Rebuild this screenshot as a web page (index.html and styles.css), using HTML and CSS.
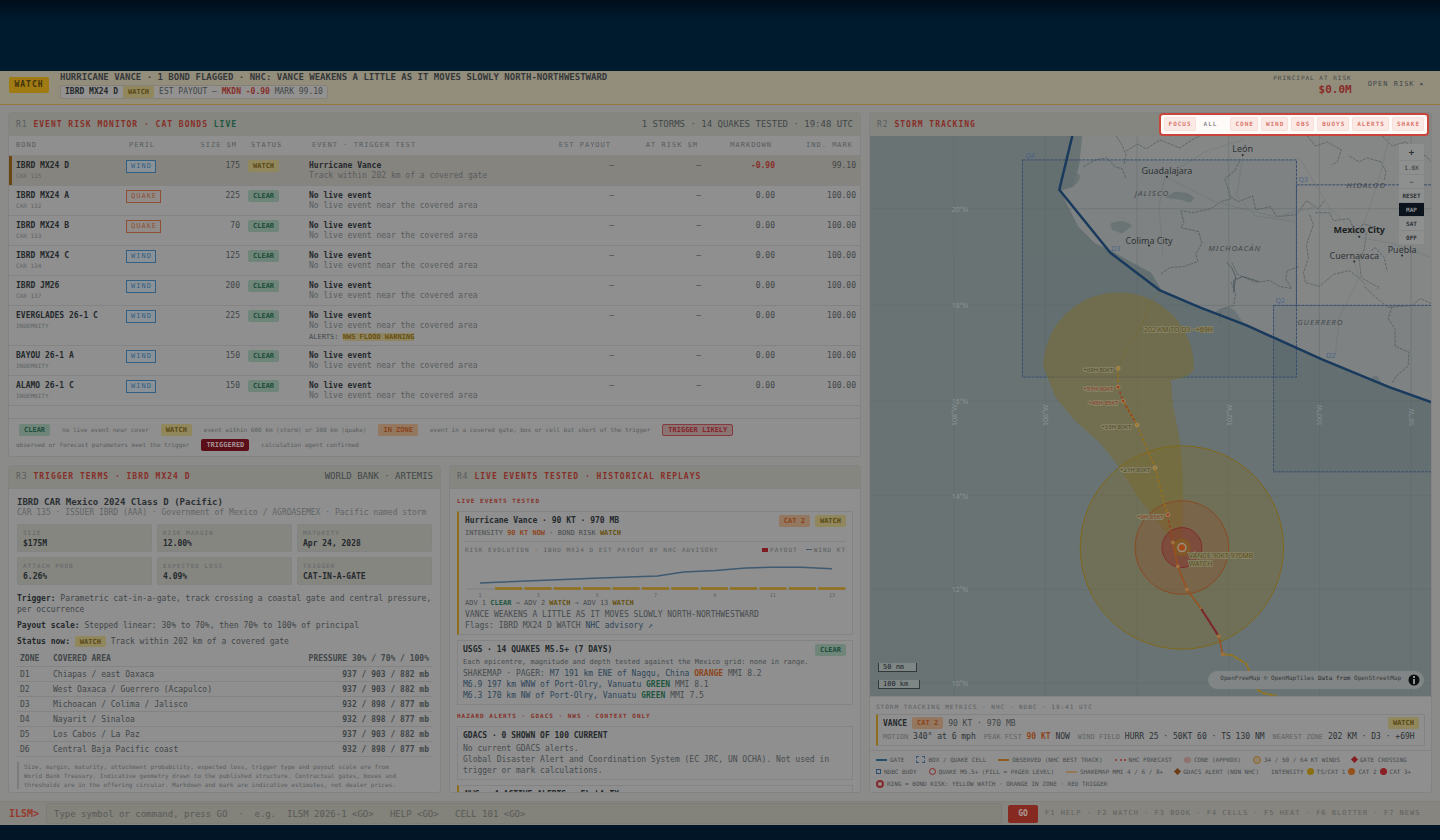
FILE: index.html
```html
<!DOCTYPE html>
<html lang="en">

<head>
    <meta charset="UTF-8">
    <meta name="viewport" content="width=device-width, initial-scale=1.0">
    <title>ILSM Event Risk</title>
    <link rel="stylesheet" href="styles.css">
</head>

<body>

    <div class="app">

        <header class="alertbar">
            <span class="level">WATCH</span>
            <div class="alert-text">
                <h1>HURRICANE VANCE · 1 BOND FLAGGED · NHC: VANCE WEAKENS A LITTLE AS IT MOVES SLOWLY NORTH-NORTHWESTWARD</h1>
                <div class="bondchip">
                    <b>IBRD MX24 D</b>
                    <span class="tag watch">WATCH</span>
                    <span>EST PAYOUT — <b class="red">MKDN -0.90</b> MARK 99.10</span>
                </div>
            </div>
            <div class="principal">
                <span>PRINCIPAL AT RISK</span>
                <b>$0.0M</b>
            </div>
            <button class="openrisk">OPEN RISK ▸</button>
        </header>

        <main class="grid">

            <section class="panel r1">
                <div class="panel-head">
                    <h2><i>R1</i> EVENT RISK MONITOR · CAT BONDS <em>LIVE</em></h2>
                    <span class="right">1 STORMS · 14 QUAKES TESTED · 19:48 UTC</span>
                </div>
                <table class="bonds">
                    <thead>
                        <tr>
                            <th class="c-bond">BOND</th>
                            <th class="c-peril">PERIL</th>
                            <th class="c-size num">SIZE $M</th>
                            <th class="c-status">STATUS</th>
                            <th class="c-event">EVENT · TRIGGER TEST</th>
                            <th class="c-pay num">EST PAYOUT</th>
                            <th class="c-risk num">AT RISK $M</th>
                            <th class="c-down num">MARKDOWN</th>
                            <th class="c-mark num">IND. MARK</th>
                        </tr>
                    </thead>
                    <tbody>
                        <tr class="selected">
                            <td><b>IBRD MX24 D</b><small>CAR 135</small></td>
                            <td><span class="peril">WIND</span></td>
                            <td class="num">175</td>
                            <td><span class="tag watch">WATCH</span></td>
                            <td><b>Hurricane Vance</b><p>Track within 202 km of a covered gate</p></td>
                            <td class="num">—</td>
                            <td class="num">—</td>
                            <td class="num"><b class="red">-0.90</b></td>
                            <td class="num">99.10</td>
                        </tr>
                        <tr>
                            <td><b>IBRD MX24 A</b><small>CAR 132</small></td>
                            <td><span class="peril quake">QUAKE</span></td>
                            <td class="num">225</td>
                            <td><span class="tag clear">CLEAR</span></td>
                            <td><b>No live event</b><p>No live event near the covered area</p></td>
                            <td class="num">—</td>
                            <td class="num">—</td>
                            <td class="num">0.00</td>
                            <td class="num">100.00</td>
                        </tr>
                        <tr>
                            <td><b>IBRD MX24 B</b><small>CAR 133</small></td>
                            <td><span class="peril quake">QUAKE</span></td>
                            <td class="num">70</td>
                            <td><span class="tag clear">CLEAR</span></td>
                            <td><b>No live event</b><p>No live event near the covered area</p></td>
                            <td class="num">—</td>
                            <td class="num">—</td>
                            <td class="num">0.00</td>
                            <td class="num">100.00</td>
                        </tr>
                        <tr>
                            <td><b>IBRD MX24 C</b><small>CAR 134</small></td>
                            <td><span class="peril">WIND</span></td>
                            <td class="num">125</td>
                            <td><span class="tag clear">CLEAR</span></td>
                            <td><b>No live event</b><p>No live event near the covered area</p></td>
                            <td class="num">—</td>
                            <td class="num">—</td>
                            <td class="num">0.00</td>
                            <td class="num">100.00</td>
                        </tr>
                        <tr>
                            <td><b>IBRD JM26</b><small>CAR 137</small></td>
                            <td><span class="peril">WIND</span></td>
                            <td class="num">200</td>
                            <td><span class="tag clear">CLEAR</span></td>
                            <td><b>No live event</b><p>No live event near the covered area</p></td>
                            <td class="num">—</td>
                            <td class="num">—</td>
                            <td class="num">0.00</td>
                            <td class="num">100.00</td>
                        </tr>
                        <tr>
                            <td><b>EVERGLADES 26-1 C</b><small>INDEMNITY</small></td>
                            <td><span class="peril">WIND</span></td>
                            <td class="num">225</td>
                            <td><span class="tag clear">CLEAR</span></td>
                            <td><b>No live event</b><p>No live event near the covered area</p>
                                <div class="nws">ALERTS: <mark>NWS FLOOD WARNING</mark></div></td>
                            <td class="num">—</td>
                            <td class="num">—</td>
                            <td class="num">0.00</td>
                            <td class="num">100.00</td>
                        </tr>
                        <tr>
                            <td><b>BAYOU 26-1 A</b><small>INDEMNITY</small></td>
                            <td><span class="peril">WIND</span></td>
                            <td class="num">150</td>
                            <td><span class="tag clear">CLEAR</span></td>
                            <td><b>No live event</b><p>No live event near the covered area</p></td>
                            <td class="num">—</td>
                            <td class="num">—</td>
                            <td class="num">0.00</td>
                            <td class="num">100.00</td>
                        </tr>
                        <tr>
                            <td><b>ALAMO 26-1 C</b><small>INDEMNITY</small></td>
                            <td><span class="peril">WIND</span></td>
                            <td class="num">150</td>
                            <td><span class="tag clear">CLEAR</span></td>
                            <td><b>No live event</b><p>No live event near the covered area</p></td>
                            <td class="num">—</td>
                            <td class="num">—</td>
                            <td class="num">0.00</td>
                            <td class="num">100.00</td>
                        </tr>
                    </tbody>
                </table>
                <div class="status-key">
                    <span class="tag clear first">CLEAR</span>
                    <span>no live event near cover</span>
                    <span class="tag watch">WATCH</span>
                    <span>event within 600 km (storm) or 300 km (quake)</span>
                    <span class="tag zone">IN ZONE</span>
                    <span>event in a covered gate, box or cell but short of the trigger</span>
                    <span class="tag likely">TRIGGER LIKELY</span>
                    <span>observed or forecast parameters meet the trigger</span>
                    <span class="tag triggered">TRIGGERED</span>
                    <span>calculation agent confirmed</span>
                </div>
            </section>

            <section class="panel r2">
                <div class="panel-head">
                    <h2><i>R2</i> STORM TRACKING</h2>
                    <div class="layers">
                        <button>FOCUS</button>
                        <button class="off">ALL</button>
                        <button>CONE</button>
                        <button>WIND</button>
                        <button>OBS</button>
                        <button>BUOYS</button>
                        <button>ALERTS</button>
                        <button>SHAKE</button>
                    </div>
                </div>
                <div class="map">
                    <svg viewBox="869 135 563 562" preserveAspectRatio="xMidYMid slice">
                        <rect x="869" y="135" width="563" height="562" fill="#697374" />
                        <!-- land -->
                        <path fill="#858787" d="M1082 135L1079 163 1073 186 1060 190 1068 206 1078 226 1095 243 1111 250 1130 261 1151 272 1162 290 1190 303 1222 315 1242 322 1290 344 1322 358 1380 382 1432 401V135z" />
                        <!-- lakes and lagoons -->
                        <g fill="#6a7475">
                            <path d="M1064 175q10-7 16 0-2 11-10 10l-8-3zM1165 197l10-6 12 1 8 5-5 5-9-3zM1215 312q12-9 20-2l9 13zM1372 379q5-9 10 4zM1110 223q12-6 22 2l-10 8-10-4z" opacity=".8" />
                            <path d="M1247 330q6-4 12 4z" />
                        </g>
                        <!-- state borders and rivers -->
                        <g fill="none" stroke="#606769" stroke-width="1" stroke-dasharray="3 1">
                            <path d="M1083 166l12-7 12-2 8 9 7 2 4 10M1116 135l6 9 4 10-2 9M1126 150l12-7 8 5 14-9 20 8 12-8 8-4M1240 160l-5 10-10 8 4 12 2 8-10 3-10 7-18 4-12-2 3 12-3 5 18 4 3 12-6 10 2 8-14 5-14 1-10 7" />
                            <path d="M1231 196l8 5 14-6 3 14 15-3 6 10 20-2 10-14 12 8 6-8M1308 135l8 10 12-4 14 8-4 12-6 3M1350 155l10 6 8-4 14 4 5 10-2 8M1383 135l10 10 14-4 8 10 12 4 5 6M1310 214l4 10-7 20 2 14-5 14 2 10 14 4 14-12 16-4 8 6 8 8M1316 212l14 0 4 8 16-2 6 14 8-9 12 4 6 6M1367 232l-2 17-5 10 2 18 10 6 8 4-2 2M1232 262l6 12 18 8 14-2 10 6 12 2-6-10 2-8 12-4" />
                            <path d="M1220 322l1-13 13-4 2-12-5-12M1365 286l14 13 10 8 24-2 8-7 11 5M1393 306l-4 12 7 11 0 17 14 6-1 14-12 10-4 7M1372 250l4-3 9 10 3 14" />
                        </g>
                        <path fill="none" stroke="#545e62" d="M1227 262l5 5 4 9-2 16 0-12 9-4 16 5" />
                        <g fill="none" stroke="#7a7e7f">
                            <path d="M1165 176l-6 30 4 50M1165 176l40-25 38-12M1243 155l-6 40 18 20 40 6M1165 176l50 25 60 15 42-10M1360 237l-30-30-30-50M1360 237l20-60 10-40M1360 237l30 5 42 15M1355 262l5 15-20 40-4 38" />
                        </g>
                        <!-- graticule -->
                        <path stroke="#5c6869" stroke-width="1" opacity=".4" d="M953 135V697M1045 135V697M1137 135V697M1229 135V697M1320 135V697M1412 135V697M869 208H1432M869 305H1432M869 401H1432M869 496H1432M869 590H1432M869 684H1432" />
                        <g class="deg">
                            <text x="951" y="211">20°N</text>
                            <text x="951" y="308">18°N</text>
                            <text x="951" y="404">16°N</text>
                            <text x="951" y="499">14°N</text>
                            <text x="951" y="593">12°N</text>
                            <text x="951" y="687">10°N</text>
                            <text transform="translate(956 426) rotate(-90)">108°W</text>
                            <text transform="translate(1048 426) rotate(-90)">106°W</text>
                            <text transform="translate(1232 426) rotate(-90)">102°W</text>
                            <text transform="translate(1323 426) rotate(-90)">100°W</text>
                            <text transform="translate(1415 426) rotate(-90)">98°W</text>
                        </g>
                        <!-- quake cells -->
                        <g fill="#29405c" fill-opacity=".07" stroke="#3b4f70" stroke-width="1" stroke-dasharray="3 1">
                            <rect x="1022" y="159" width="275" height="218" />
                            <path d="M1440 184H1297V305" fill="none" />
                            <rect x="1274" y="305" width="170" height="167" />
                        </g>
                        <!-- forecast cone -->
                        <path fill="#7c6b2c" fill-opacity=".5" d="M1043 367A75 75 0 0 1 1119 292 75 75 0 0 1 1194 369Q1189 378 1171 380L1173 405 1180 440 1183 475 1183 548H1175L1166 533 1140 500 1118 466 1100 443 1075 421 1055 397z" />
                        <!-- wind radii -->
                        <circle cx="1182" cy="548" r="102" fill="#7c6b2c" fill-opacity=".38" stroke="#806719" />
                        <circle cx="1182" cy="548" r="47" fill="#8a4e2a" fill-opacity=".32" stroke="#8a4a24" />
                        <circle cx="1182" cy="548" r="20" fill="#822f2c" fill-opacity=".45" stroke="#7c2d2b" />
                        <circle cx="1182" cy="548" r="9" fill="#86601c" fill-opacity=".6" />
                        <!-- forecast track -->
                        <g fill="none" stroke-width="1.5">
                            <path stroke="#80611c" stroke-width="1" stroke-dasharray="1 2" d="M1118 368L1130 342 1140 328 1150 304 1160 290" />
                            <path stroke="#96701a" stroke-dasharray="3 2" d="M1168 517L1155 468 1137 425 1123 401M1118 387V368" />
                            <path stroke="#97421f" stroke-dasharray="3 2" d="M1173 543L1168 517M1137 425L1123 401 1118 387" />
                            <path stroke="#9a501c" d="M1173 543L1178 567 1187 590 1201 609M1219 637L1223 655" />
                            <path stroke="#7d2328" stroke-width="2" d="M1201 609L1219 637" />
                            <path stroke="#94761f" stroke-width="2" stroke-dasharray="5 1" d="M1223 655L1232 656 1246 664 1250 673 1257 690 1263 694 1277 697" />
                        </g>
                        <g fill="#a37d2a" stroke="#9a8a66">
                            <circle cx="1118" cy="368" r="2" />
                            <circle cx="1118" cy="387" r="2" fill="#a0401f" />
                            <circle cx="1123" cy="401" r="2" fill="#a0401f" />
                            <circle cx="1137" cy="425" r="2" />
                            <circle cx="1155" cy="468" r="2" />
                            <circle cx="1168" cy="515" r="2" fill="#a0401f" />
                        </g>
                        <g fill="#a0703f">
                            <circle cx="1173" cy="543" r="2" />
                            <circle cx="1178" cy="567" r="2" />
                            <circle cx="1187" cy="590" r="2" />
                            <circle cx="1201" cy="609" r="1" />
                            <circle cx="1219" cy="637" r="2" />
                            <circle cx="1223" cy="655" r="2" />
                        </g>
                        <circle cx="1182" cy="548" r="4" fill="#a34a18" stroke="#989083" stroke-width="1.5" />
                        <!-- coastal gate -->
                        <path fill="none" stroke="#193a5c" stroke-width="2.5" stroke-linejoin="round" d="M1072 135L1059 189 1110 252 1160 290 1200 307 1247 325 1322 359 1390 387 1432 402" />
                        <g class="ids">
                            <text x="1025" y="157">Q4</text>
                            <text x="1299" y="181">Q3</text>
                            <text x="1276" y="303">Q2</text>
                            <text x="1111" y="250">D3</text>
                            <text x="1327" y="358">D2</text>
                        </g>
                        <g class="places">
                            <text x="1243" y="151">León</text>
                            <text x="1167" y="173">Guadalajara</text>
                            <text x="1149" y="243">Colima City</text>
                            <text x="1355" y="258">Cuernavaca</text>
                            <text x="1403" y="252">Puebla</text>
                            <text x="1360" y="232" class="capital">Mexico City</text>
                        </g>
                        <g fill="#23282a">
                            <circle cx="1243" cy="154" r="1" />
                            <circle cx="1167" cy="176" r="1" />
                            <circle cx="1149" cy="245" r="1" />
                            <circle cx="1355" cy="261" r="1" />
                            <circle cx="1403" cy="255" r="1" />
                            <circle cx="1360" cy="236" r="1" />
                        </g>
                        <g class="states">
                            <text x="1152" y="195">JALISCO</text>
                            <text x="1367" y="187">HIDALGO</text>
                            <text x="1235" y="250">MICHOACÁN</text>
                            <text x="1321" y="325">GUERRERO</text>
                        </g>
                        <g class="fcst">
                            <text x="1144" y="332" class="near">202 KM TO D3 · +69H</text>
                            <text x="1083" y="372">+69H 80KT</text>
                            <text x="1083" y="391" class="hot">+57H 90KT</text>
                            <text x="1088" y="405" class="hot">+45H 85KT</text>
                            <text x="1101" y="429">+33H 80KT</text>
                            <text x="1120" y="472">+21H 80KT</text>
                            <text x="1137" y="519" class="hot">+9H 85KT</text>
                            <text x="1189" y="559" class="storm">VANCE 90KT 970MB</text>
                            <text x="1189" y="567" class="storm">WATCH</text>
                        </g>
                    </svg>
                    <div class="zoomer">
                        <button>+</button>
                        <span>1.0X</span>
                        <button>−</button>
                        <button>RESET</button>
                        <button class="on">MAP</button>
                        <button>SAT</button>
                        <button>OFF</button>
                    </div>
                    <div class="scales">
                        <span class="nm">50 nm</span>
                        <span class="km">100 km</span>
                    </div>
                    <div class="credits">
                        <p><a href="#">OpenFreeMap</a> <a href="#">© OpenMapTiles</a> Data from <a href="#">OpenStreetMap</a></p>
                        <svg viewBox="0 0 12 12" width="12" height="12">
                            <circle cx="6" cy="6" r="5.5" fill="#0b0e10" />
                            <path fill="#8f9090" d="M5 2h2v2H5zM5 5h2v5H5z" />
                        </svg>
                    </div>
                </div>
                <div class="metrics">
                    <h3>STORM TRACKING METRICS · NHC · NDBC · 19:41 UTC</h3>
                    <div class="stormcard">
                        <div class="row">
                            <b>VANCE</b>
                            <span class="tag zone">CAT 2</span>
                            <span>90 KT · 970 MB</span>
                            <span class="tag watch end">WATCH</span>
                        </div>
                        <div class="facts">
                            <span><i>MOTION</i> 340° at 6 mph</span>
                            <span><i>PEAK FCST</i> <b class="orange">90 KT</b> NOW</span>
                            <span><i>WIND FIELD</i> HURR 25 · 50KT 60 · TS 130 NM</span>
                            <span><i>NEAREST ZONE</i> 202 KM · D3 · +69H</span>
                        </div>
                    </div>
                </div>
                <div class="map-key">
                    <span><i class="line blue"></i>GATE</span>
                    <span><i class="cell"></i>BOX / QUAKE CELL</span>
                    <span><i class="line amber"></i>OBSERVED (NHC BEST TRACK)</span>
                    <span><i class="line dots"></i>NHC FORECAST</span>
                    <span><i class="cone"></i>CONE (APPROX)</span>
                    <span><i class="ring sand"></i>34 / 50 / 64 KT WINDS</span>
                    <span><i class="diamond"></i>GATE CROSSING</span>
                    <span><i class="buoy"></i>NDBC BUOY</span>
                    <span><i class="ring thin"></i>QUAKE M5.5+ (FILL = PAGER LEVEL)</span>
                    <span><i class="line pale"></i>SHAKEMAP MMI 4 / 6 / 8+</span>
                    <span><i class="diamond brown"></i>GDACS ALERT (NON NHC)</span>
                    <span class="intensity">INTENSITY<i class="dot y"></i>TS/CAT 1<i class="dot o"></i>CAT 2<i class="dot r"></i>CAT 3+</span>
                    <span><i class="ring"></i>RING = BOND RISK: YELLOW WATCH · ORANGE IN ZONE · RED TRIGGER</span>
                </div>
            </section>

            <section class="panel r3">
                <div class="panel-head">
                    <h2><i>R3</i> TRIGGER TERMS · IBRD MX24 D</h2>
                    <span class="right">WORLD BANK · ARTEMIS</span>
                </div>
                <div class="terms">
                    <h3>IBRD CAR Mexico 2024 Class D (Pacific)</h3>
                    <p class="issuer">CAR 135 · ISSUER IBRD (AAA) · Government of Mexico / AGROASEMEX · Pacific named storm</p>
                    <dl class="tiles">
                        <div><dt>SIZE</dt><dd>$175M</dd></div>
                        <div><dt>RISK MARGIN</dt><dd>12.00%</dd></div>
                        <div><dt>MATURITY</dt><dd>Apr 24, 2028</dd></div>
                        <div><dt>ATTACH PROB</dt><dd>6.26%</dd></div>
                        <div><dt>EXPECTED LOSS</dt><dd>4.09%</dd></div>
                        <div><dt>TRIGGER</dt><dd>CAT-IN-A-GATE</dd></div>
                    </dl>
                    <p><b>Trigger:</b> Parametric cat-in-a-gate, track crossing a coastal gate and central pressure, per occurrence</p>
                    <p><b>Payout scale:</b> Stepped linear: 30% to 70%, then 70% to 100% of principal</p>
                    <p><b>Status now:</b> <span class="tag watch">WATCH</span> Track within 202 km of a covered gate</p>
                    <table class="zones">
                        <thead>
                            <tr><th class="c-zone">ZONE</th><th>COVERED AREA</th><th class="num">PRESSURE 30% / 70% / 100%</th></tr>
                        </thead>
                        <tbody>
                            <tr><td>D1</td><td>Chiapas / east Oaxaca</td><td class="num">937 / 903 / 882 mb</td></tr>
                            <tr><td>D2</td><td>West Oaxaca / Guerrero (Acapulco)</td><td class="num">937 / 903 / 882 mb</td></tr>
                            <tr><td>D3</td><td>Michoacan / Colima / Jalisco</td><td class="num">932 / 898 / 877 mb</td></tr>
                            <tr><td>D4</td><td>Nayarit / Sinaloa</td><td class="num">932 / 898 / 877 mb</td></tr>
                            <tr><td>D5</td><td>Los Cabos / La Paz</td><td class="num">937 / 903 / 882 mb</td></tr>
                            <tr><td>D6</td><td>Central Baja Pacific coast</td><td class="num">932 / 898 / 877 mb</td></tr>
                        </tbody>
                    </table>
                    <blockquote>Size, margin, maturity, attachment probability, expected loss, trigger type and payout scale are from World Bank Treasury. Indicative geometry drawn to the published structure. Contractual gates, boxes and thresholds are in the offering circular. Markdown and mark are indicative estimates, not dealer prices.</blockquote>
                </div>
            </section>

            <section class="panel r4">
                <div class="panel-head">
                    <h2><i>R4</i> LIVE EVENTS TESTED · HISTORICAL REPLAYS</h2>
                </div>
                <div class="events">
                    <h4>LIVE EVENTS TESTED</h4>
                    <article class="card flagged">
                        <div class="row">
                            <b>Hurricane Vance · 90 KT · 970 MB</b>
                            <span class="tag zone end">CAT 2</span>
                            <span class="tag watch">WATCH</span>
                        </div>
                        <p class="small">INTENSITY <b class="orange">90 KT NOW</b> · BOND RISK <b class="gold">WATCH</b></p>
                        <div class="chart-head">
                            <span>RISK EVOLUTION · IBRD MX24 D EST PAYOUT BY NHC ADVISORY</span>
                            <span class="end"><i class="sq"></i>PAYOUT</span>
                            <span><i class="ln"></i>WIND KT</span>
                        </div>
                        <svg class="chart" viewBox="465 556 380 43" preserveAspectRatio="none">
                            <path stroke="#7c8081" d="M467 590H845" />
                            <path stroke="#92701b" stroke-width="2.5" stroke-dasharray="27 2.3" d="M495 589.5H845" />
                            <path fill="none" stroke="#3f5a70" stroke-width="1.5" d="M480 584L600 579 657 577 683 573 715 571.5 745 569 770 568.3 800 568.3 831 569.7" />
                            <g class="ticks">
                                <text x="480" y="598">1</text>
                                <text x="538" y="598">3</text>
                                <text x="597" y="598">5</text>
                                <text x="655" y="598">7</text>
                                <text x="714" y="598">9</text>
                                <text x="772" y="598">11</text>
                                <text x="831" y="598">13</text>
                            </g>
                        </svg>
                        <p class="small">ADV 1 <b class="green">CLEAR</b> → ADV 2 <b class="gold">WATCH</b> → ADV 13 <b class="gold">WATCH</b></p>
                        <p>VANCE WEAKENS A LITTLE AS IT MOVES SLOWLY NORTH-NORTHWESTWARD</p>
                        <p>Flags: IBRD MX24 D WATCH <a href="#">NHC advisory ↗</a></p>
                    </article>
                    <article class="card">
                        <div class="row">
                            <b>USGS · 14 QUAKES M5.5+ (7 DAYS)</b>
                            <span class="tag clear end">CLEAR</span>
                        </div>
                        <p class="small">Each epicentre, magnitude and depth tested against the Mexico grid: none in range.</p>
                        <p>SHAKEMAP · PAGER: <a href="#">M7 191 km ENE of Nagqu, China</a> <b class="orange">ORANGE</b> MMI 8.2</p>
                        <p><a href="#">M6.9 197 km WNW of Port-Olry, Vanuatu</a> <b class="green">GREEN</b> MMI 8.1</p>
                        <p><a href="#">M6.3 170 km NW of Port-Olry, Vanuatu</a> <b class="green">GREEN</b> MMI 7.5</p>
                    </article>
                    <h4>HAZARD ALERTS · GDACS · NWS · CONTEXT ONLY</h4>
                    <article class="card">
                        <div class="row"><b>GDACS · 0 SHOWN OF 100 CURRENT</b></div>
                        <p>No current GDACS alerts.</p>
                        <p>Global Disaster Alert and Coordination System (EC JRC, UN OCHA). Not used in trigger or mark calculations.</p>
                    </article>
                    <article class="card flagged">
                        <div class="row"><b>NWS · 4 ACTIVE ALERTS · FL LA TX</b></div>
                    </article>
                </div>
            </section>

        </main>

        <form class="cmd">
            <label for="cmd">ILSM&gt;</label>
            <input id="cmd" type="text" placeholder="Type symbol or command, press GO  ·  e.g.  ILSM 2026-1 &lt;GO&gt;   HELP &lt;GO&gt;   CELL 101 &lt;GO&gt;">
            <button type="button">GO</button>
            <span>F1 HELP · F2 WATCH · F3 BOOK · F4 CELLS · F5 HEAT · F6 BLOTTER · F7 NEWS</span>
        </form>

    </div>

</body>

</html>
```
FILE: styles.css
```css
* {
    box-sizing: border-box;
    margin: 0;
    padding: 0;
}

:root {
    --ink: #24292c;
    --text: #414648;
    --muted: #585c5e;
    --faint: #606466;
    --red: #862f28;
    --orange: #8c461c;
    --gold: #66500f;
    --green: #1f5640;
    --link: #2d4559;
    --panel: #8f8f8f;
    --head: #868681;
    --line: #828382;
}

body {
    background: linear-gradient(#010e1c, #001a2e 20px, #001a2e 60%, #021526);
    font-family: "DejaVu Sans Mono", "Liberation Mono", monospace;
    font-size: 8px;
    line-height: 11px;
    color: var(--text);
}

h1,
h2,
h3,
h4 {
    font-size: inherit;
}

button,
input {
    font: inherit;
    color: inherit;
    border: 0;
    background: none;
}

i,
em {
    font-style: normal;
    font-weight: normal;
}

a {
    color: var(--link);
    text-decoration: none;
}

.app {
    display: flex;
    flex-direction: column;
    height: 100vh;
    padding: 71px 0 15px;
}

.red { color: var(--red); }
.orange { color: var(--orange); }
.gold { color: var(--gold); }
.green { color: var(--green); }
.end { margin-left: auto; }

/* alert bar */

.alertbar {
    display: flex;
    align-items: center;
    height: 34px;
    flex: none;
    padding: 0 15px 0 9px;
    background: #938e7c;
    border-bottom: 1px solid #95783a;
}

.level {
    width: 40px;
    height: 16px;
    margin: 0 11px 6px 0;
    border-radius: 2px;
    background: #a07a12;
    color: #3f310c;
    font-weight: bold;
    letter-spacing: 1px;
    line-height: 16px;
    text-align: center;
}

.alert-text {
    flex: 1;
    height: 34px;
}

.alert-text h1 {
    font-size: 9px;
    line-height: 12px;
    color: #33373a;
    white-space: nowrap;
}

.bondchip {
    display: inline-flex;
    align-items: center;
    gap: 5px;
    height: 14px;
    margin-top: 2px;
    padding: 0 4px;
    border: 1px solid #858176;
    border-radius: 2px;
    background: #939290;
}

.bondchip > b {
    color: var(--ink);
}

.principal {
    display: flex;
    flex-direction: column;
    align-items: flex-end;
    margin: 0 16px 6px 0;
    font-size: 6px;
    letter-spacing: 1px;
}

.principal b {
    font-size: 11px;
    line-height: 14px;
    letter-spacing: 0;
    color: #872c28;
}

.openrisk {
    font-size: 7px;
    letter-spacing: 1px;
    margin: 0 0 6px;
}

/* panels */

.grid {
    display: grid;
    flex: 1;
    min-height: 0;
    grid-template-columns: minmax(0, 433fr) minmax(0, 412fr) minmax(0, 563fr);
    grid-template-rows: auto minmax(0, 1fr);
    gap: 8px;
    padding: 7px 8px 8px;
    background: #8b8b8a;
}

.panel {
    display: flex;
    flex-direction: column;
    min-height: 0;
    overflow: hidden;
    border: 1px solid var(--line);
    border-radius: 3px;
    background: var(--panel);
}

.r1 { grid-column: 1 / 3; }
.r2 { grid-column: 3; grid-row: 1 / 3; }

.panel-head {
    display: flex;
    align-items: center;
    justify-content: space-between;
    height: 23px;
    flex: none;
    padding: 0 7px;
    background: var(--head);
    border-bottom: 1px solid var(--line);
}

.panel-head h2 {
    color: var(--red);
    letter-spacing: 1px;
}

.panel-head i {
    color: var(--muted);
}

.panel-head em {
    color: var(--green);
    font-weight: bold;
}

.right {
    font-size: 9px;
}

.tag {
    display: inline-block;
    height: 12px;
    padding: 0 5px;
    border-radius: 2px;
    font-size: 7px;
    font-weight: bold;
    line-height: 12px;
    white-space: nowrap;
}

.watch { background: #91875c; color: #584814; }
.clear { background: #6f857a; color: #1b4d39; }
.zone { background: #93785f; color: #8a431b; }
.likely { background: #8b7474; color: #85252a; border: 1px solid #853a3e; line-height: 10px; }
.triggered { background: #5c0e18; color: #a39496; }

/* bond table */

table {
    width: 100%;
    border-collapse: collapse;
}

th,
td {
    text-align: left;
    vertical-align: top;
}

.num {
    text-align: right;
}

.bonds {
    table-layout: fixed;
}

.bonds th {
    height: 19px;
    padding: 0 7px;
    font-size: 7px;
    font-weight: normal;
    letter-spacing: 1px;
    color: var(--muted);
    vertical-align: middle;
    border-bottom: 1px solid var(--line);
    white-space: nowrap;
}

.bonds td {
    height: 30px;
    padding: 4px 4px 0;
    line-height: 12px;
    border-bottom: 1px solid var(--line);
}

.bonds td:first-child {
    padding-left: 7px;
}

.c-bond { width: 113px; }
.c-peril { width: 60px; }
.c-size { width: 62px; }
.c-status { width: 61px; }
.c-event { width: 200px; }
.c-pay { width: 113px; }
.c-risk { width: 87px; }
.c-down { width: 74px; }
.c-mark { width: 81px; }

.bonds td > b:first-child:not(.red) {
    display: block;
    color: var(--ink);
}

.bonds small {
    display: block;
    font-size: 6px;
    line-height: 8px;
    color: var(--faint);
}

.bonds p {
    line-height: 8px;
    color: var(--muted);
    white-space: nowrap;
}

.nws {
    margin: 2px 0 3px;
    font-size: 7px;
    line-height: 10px;
}

.nws mark {
    background: #8f8563;
    color: var(--gold);
    font-weight: bold;
}

.selected {
    background: #86847e;
    box-shadow: inset 3px 0 #6b4613;
}

.peril {
    display: inline-block;
    height: 13px;
    padding: 0 3px 0 4px;
    border: 1px solid #335f83;
    font-size: 7px;
    line-height: 11px;
    letter-spacing: 1px;
    color: #335f83;
    background: #8a9297;
}

.quake {
    border-color: #8d5034;
    color: #8d5034;
    background: #918c89;
}

.status-key {
    display: flex;
    flex-wrap: wrap;
    align-items: center;
    gap: 3px 12px;
    margin-top: 12px;
    padding: 5px 7px;
    border-top: 1px solid var(--line);
    font-size: 6px;
    line-height: 12px;
    color: var(--muted);
}

.status-key .first {
    margin-left: 3px;
}

/* storm map */

.r2 .panel-head {
    padding-right: 2px;
}

.layers {
    display: flex;
    align-items: center;
    gap: 3px;
    height: 23px;
    padding: 0 3px;
    border: 2px solid #c9443a;
    border-radius: 4px;
    background: #fdfaf8;
}

.layers button {
    height: 14px;
    padding: 0 3px 0 4px;
    border: 1px solid #f8dfda;
    border-radius: 2px;
    background: #fbe9e5;
    color: #d9776d;
    font-size: 6px;
    font-weight: bold;
    line-height: 12px;
    letter-spacing: 1px;
}

.layers .off {
    margin-right: 6px;
    border-color: #fdfaf8;
    background: #fdfaf8;
    color: #8b9094;
}

.map {
    position: relative;
    flex: 1;
    min-height: 0;
}

.map > svg {
    display: block;
    width: 100%;
    height: 100%;
}

.map text {
    font-family: "Noto Sans", "Open Sans", sans-serif;
}

.deg text {
    font-size: 7px;
    fill: #8b9595;
}

.ids text {
    font-size: 7px;
    fill: #4c6287;
}

.places text {
    font-size: 9px;
    fill: #2e3335;
    text-anchor: middle;
}

.places .capital {
    font-weight: bold;
    fill: #1b1f21;
}

.states text {
    font-size: 8px;
    font-style: italic;
    letter-spacing: 1px;
    fill: #45494b;
    text-anchor: middle;
}

.fcst text {
    font-size: 6px;
    fill: #4d4520;
    stroke: #848165;
    stroke-width: 2px;
    paint-order: stroke;
}

.fcst .hot {
    fill: #8b3a22;
}

.fcst .near,
.fcst .storm {
    font-size: 7px;
    fill: #594c16;
}

.zoomer {
    position: absolute;
    top: 8px;
    right: 7px;
    display: flex;
    flex-direction: column;
    width: 25px;
    background: #8e8f8f;
}

.zoomer > * {
    height: 14px;
    border-bottom: 1px solid #858686;
    font-size: 6px;
    font-weight: bold;
    line-height: 13px;
    text-align: center;
    color: #2c3134;
}

.zoomer > :first-child {
    height: 17px;
    font-size: 9px;
}

.zoomer span {
    font-weight: normal;
}

.zoomer .on {
    background: #0b131c;
    color: #8f9293;
}

.scales {
    position: absolute;
    left: 8px;
    bottom: 7px;
    display: flex;
    flex-direction: column;
    gap: 8px;
    font-size: 7px;
    line-height: 8px;
    color: #1f2426;
}

.scales span {
    height: 9px;
    padding-left: 4px;
    border: 1px solid #33393a;
    border-top: 0;
    background: #7e8686;
}

.nm { width: 39px; }
.km { width: 42px; }

.credits {
    position: absolute;
    right: 7px;
    bottom: 7px;
    display: flex;
    align-items: center;
    gap: 7px;
    height: 18px;
    padding: 0 4px 0 12px;
    border-radius: 9px;
    background: #828585;
    font-size: 6px;
    color: #23282a;
}

.credits p {
    padding-bottom: 6px;
}

.credits a {
    color: #353a3c;
}

.metrics {
    padding: 4px 6px;
    border-bottom: 1px solid var(--line);
    border-top: 1px solid var(--line);
}

.metrics h3 {
    font-size: 6px;
    font-weight: normal;
    letter-spacing: 1px;
    color: var(--muted);
    margin-bottom: 2px;
}

.stormcard {
    padding: 2px 5px;
    border: 1px solid var(--line);
    border-left: 2px solid #8f6e1b;
}

.row {
    display: flex;
    align-items: center;
    gap: 5px;
    height: 12px;
}

.row b {
    color: var(--ink);
}

.facts {
    display: flex;
    flex-wrap: wrap;
    gap: 0 8px;
    margin-top: 2px;
    color: #2c3236;
}

.facts i {
    font-size: 7px;
    color: var(--faint);
}

.map-key {
    display: flex;
    flex-wrap: wrap;
    gap: 1px 12px;
    padding: 3px 6px;
    font-size: 6px;
    color: #464b4d;
}

.map-key span {
    display: flex;
    align-items: center;
    gap: 3px;
}

.map-key i {
    flex: none;
}

.line { width: 11px; height: 2px; }
.blue { background: #24506e; }
.amber { background: #8f5a1c; }
.pale { background: #957655; }
.dots { border-top: 2px dotted #8d4a42; height: 0; }
.cell { width: 9px; height: 7px; border: 1px dashed #345578; }
.cone { width: 7px; height: 6px; border-radius: 3px; background: #8f7270; }
.ring { width: 8px; height: 8px; border: 2px solid #85282a; border-radius: 50%; }
.ring.thin { width: 7px; height: 7px; border-width: 1px; }
.ring.sand { border: 1px solid #91622c; background: #91846c; }
.diamond { width: 5px; height: 5px; background: #851d20; transform: rotate(45deg); }
.brown { background: #6b3c16; }
.buoy { width: 5px; height: 5px; border: 1px solid #2b4d72; }
.dot { width: 7px; height: 7px; border-radius: 50%; }
.y { background: #8b6e12; }
.o { background: #93511b; }
.r { background: #8b1f23; }

/* trigger terms */

.terms {
    padding: 7px 8px 0;
}

.terms h3 {
    font-size: 9px;
    line-height: 12px;
    color: #2b3033;
}

.issuer {
    color: var(--faint);
    line-height: 10px;
    white-space: nowrap;
}

.tiles {
    display: grid;
    grid-template-columns: repeat(3, 1fr);
    gap: 5px;
    margin: 6px 0 8px;
}

.tiles div {
    height: 28px;
    padding: 2px 5px;
    border: 1px solid var(--line);
    border-radius: 2px;
    background: var(--head);
}

.tiles dt {
    font-size: 6px;
    letter-spacing: 1px;
    color: var(--faint);
}

.tiles dd {
    font-weight: bold;
    color: var(--ink);
}

.terms p:not(.issuer) {
    margin-bottom: 5px;
}

.terms p b {
    color: var(--ink);
}

.terms p .tag {
    vertical-align: top;
    height: 11px;
}

.zones th,
.zones td {
    height: 15px;
    padding: 0 3px;
    vertical-align: middle;
    border-bottom: 1px solid var(--line);
}

.zones td.num {
    font-weight: bold;
}

.c-zone {
    width: 33px;
}

blockquote {
    margin-top: 5px;
    padding: 0 28px 0 5px;
    border-left: 2px solid #7b7c7c;
    font-size: 6px;
    line-height: 9px;
    color: var(--muted);
}

/* live events */

.events {
    padding: 6px 7px 0;
}

.events h4 {
    font-size: 6px;
    line-height: 12px;
    letter-spacing: 1px;
    color: var(--red);
    margin-bottom: 4px;
}

.card {
    margin-bottom: 5px;
    padding: 3px 6px 3px 5px;
    border: 1px solid var(--line);
}

.card .row {
    margin-bottom: 1px;
}

.flagged {
    border-left: 2px solid #8f6e1b;
    padding-left: 6px;
}

.card p {
    color: #464b4e;
}

.small {
    font-size: 7px;
}

.chart-head {
    display: flex;
    gap: 8px;
    margin-top: 2px;
    padding-top: 2px;
    border-top: 1px solid var(--line);
    font-size: 6px;
    letter-spacing: 1px;
    white-space: nowrap;
    color: var(--muted);
}

.sq,
.ln {
    display: inline-block;
    width: 6px;
    height: 4px;
    margin-right: 2px;
    background: #7d1d22;
}

.ln {
    height: 1px;
    vertical-align: middle;
    background: #3f5a70;
}

.chart {
    display: block;
    width: 100%;
    height: 43px;
}

.ticks text {
    font-size: 5px;
    fill: var(--muted);
    text-anchor: middle;
}

/* command line */

.cmd {
    display: flex;
    align-items: center;
    height: 24px;
    flex: none;
    padding: 0 7px 0 9px;
    background: #868580;
    border-top: 1px solid #807f7a;
}

.cmd label {
    width: 37px;
    font-size: 10px;
    font-weight: bold;
    color: #97392d;
}

.cmd input {
    flex: 1;
    height: 21px;
    padding: 0 7px;
    border: 1px solid #7d7c77;
    border-radius: 2px;
    background: #83827b;
    font-size: 9px;
}

.cmd input::placeholder {
    color: #585a57;
}

.cmd button {
    width: 30px;
    height: 18px;
    margin: 0 7px 0 6px;
    border-radius: 2px;
    background: #862a21;
    color: #aa9c98;
    font-weight: bold;
}

.cmd span {
    width: 388px;
    font-size: 7px;
    letter-spacing: 1px;
    color: #5f615e;
    white-space: nowrap;
}
```
